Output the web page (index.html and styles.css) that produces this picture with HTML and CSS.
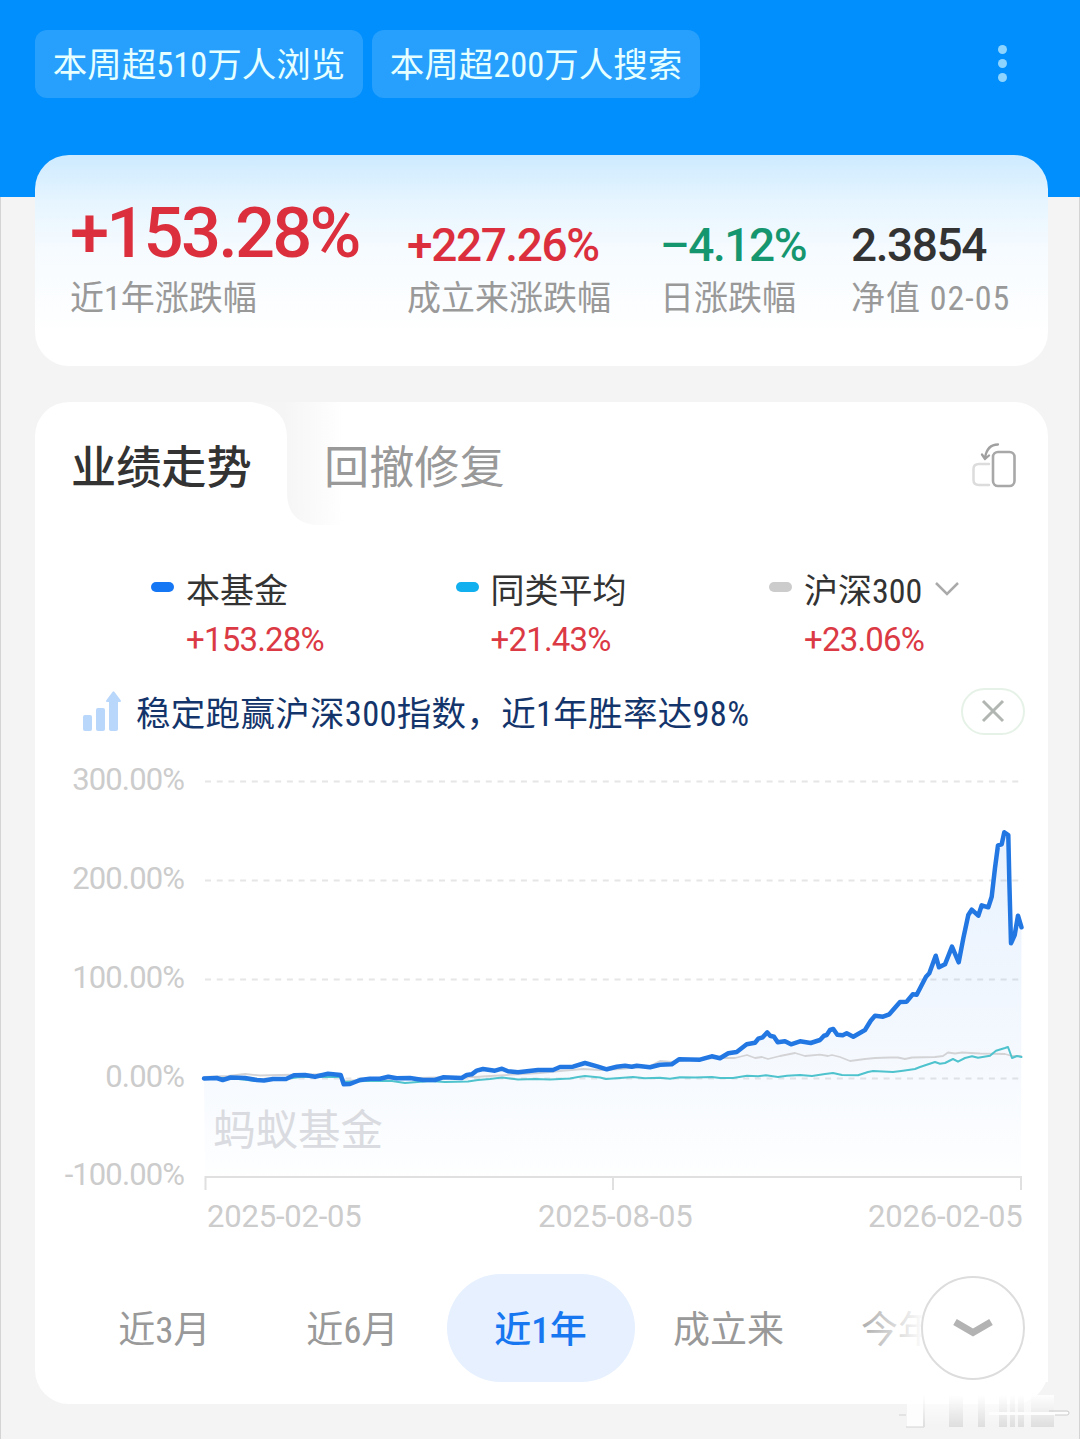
FILE: index.html
```html
<!DOCTYPE html>
<html lang="zh-CN">
<head>
<meta charset="utf-8">
<title>基金详情</title>
<link rel="stylesheet" href="styles.css">
</head>
<body>

<header class="top">
  <span class="chip">本周超510万人浏览</span>
  <span class="chip">本周超200万人搜索</span>
  <div class="more"><i></i><i></i><i></i></div>
</header>

<section class="card summary">
  <div class="stat big">
    <div class="num up">+153.28%</div>
    <div class="label">近1年涨跌幅</div>
  </div>
  <div class="stat">
    <div class="num up">+227.26%</div>
    <div class="label">成立来涨跌幅</div>
  </div>
  <div class="stat">
    <div class="num down">–4.12%</div>
    <div class="label">日涨跌幅</div>
  </div>
  <div class="stat">
    <div class="num">2.3854</div>
    <div class="label date">净值 02-05</div>
  </div>
</section>

<section class="card trend">
  <div class="tabs">
    <svg class="tab-edge" width="100" height="124" viewBox="0 0 100 124">
      <defs>
        <linearGradient id="edge" x1="0.35" x2="1" y1="0" y2="0">
          <stop offset="0" stop-color="#f5f5f5"/>
          <stop offset="1" stop-color="#fff"/>
        </linearGradient>
      </defs>
      <path d="M0 0H92V123H66Q36 121 36 90V36Q36 4 0 0Z" fill="url(#edge)"/>
    </svg>
    <div class="tab active">业绩走势</div>
    <div class="tab">回撤修复</div>
    <svg class="rotate" width="46" height="48" viewBox="0 0 46 48" fill="none" stroke-linecap="round" stroke-linejoin="round">
      <path d="M18 22H8Q2.500 22 2.500 27V38Q2.500 43 8 43H18" stroke="#dcdcdc" stroke-width="2.500"/>
      <rect x="22" y="10" width="21.500" height="34" rx="5" stroke="#a8a8a8" stroke-width="2.600"/>
      <path d="M27 2.500Q16 2.500 14 16M11 12.500L14 17L18 13.500" stroke="#a0a0a0" stroke-width="2.300"/>
    </svg>
  </div>

  <div class="legend">
    <div class="series">
      <i class="mark fund"></i>
      <div><div class="name">本基金</div><div class="value">+153.28%</div></div>
    </div>
    <div class="series">
      <i class="mark avg"></i>
      <div><div class="name">同类平均</div><div class="value">+21.43%</div></div>
    </div>
    <div class="series">
      <i class="mark hs"></i>
      <div><div class="name">沪深300</div><div class="value">+23.06%</div></div>
      <svg class="drop" width="26" height="18" viewBox="0 0 26 18" fill="none" stroke="#aaa" stroke-width="2.500"><path d="M2 3L13 14L24 3"/></svg>
    </div>
  </div>

  <div class="tip">
    <svg width="40" height="42" viewBox="0 0 40 42" fill="#b9d6fb">
      <rect x="0" y="25" width="9" height="16" rx="2"/>
      <rect x="13" y="18" width="9" height="23" rx="2"/>
      <path d="M26 39V12H23.500Q22.500 11 23.500 10L29.500 2Q30.500 0.500 31.500 2L37.500 10Q38.500 11 37.500 12H35V39Q35 41 33 41H28Q26 41 26 39Z"/>
    </svg>
    <span class="tip-text">稳定跑赢沪深300指数，近1年胜率达98%</span>
    <button class="close"><svg width="24" height="24" viewBox="0 0 24 24" stroke="#b2b6b2" stroke-width="3"><path d="M2 2L22 22M22 2L2 22"/></svg></button>
  </div>

  <svg class="chart" width="1013" height="490" viewBox="35 750 1013 490">
    <defs>
      <linearGradient id="fill" gradientUnits="userSpaceOnUse" x1="0" y1="830" x2="0" y2="1176">
        <stop offset="0" stop-color="#1677f0" stop-opacity="0.100"/>
        <stop offset="0.600" stop-color="#1677f0" stop-opacity="0.050"/>
        <stop offset="1" stop-color="#1677f0" stop-opacity="0.005"/>
      </linearGradient>
    </defs>
    <g class="grid">
      <path d="M205 781.500H1021M205 880.500H1021M205 979.500H1021M205 1078.500H1021"/>
    </g>
    <path class="axis" d="M205.500 1190V1177H1021V1190M613 1177V1190"/>
    <g class="ylab">
      <text x="184" y="790">300.00%</text>
      <text x="184" y="889">200.00%</text>
      <text x="184" y="988">100.00%</text>
      <text x="184" y="1087">0.00%</text>
      <text x="184" y="1185">-100.00%</text>
    </g>
    <g class="xlab">
      <text x="207" y="1227">2025-02-05</text>
      <text x="538" y="1227">2025-08-05</text>
      <text x="868" y="1227">2026-02-05</text>
    </g>
    <path id="area" fill="url(#fill)"/>
    <text class="wm" x="213" y="1145">蚂蚁基金</text>
    <polyline class="line hs" points="204,1077 228,1076 245,1074 260,1075.5 280,1075 340,1074 345,1081 375,1079 460,1077 475,1077 490,1076 540,1073 560,1071 583,1069 600,1070 620,1069 650,1066 660,1061 672,1062 690,1059 720,1058 735,1058 747,1055 755,1058 762,1057 768,1059 780,1056 795,1053 805,1056 820,1054.7 828,1056 832,1055 840,1057 850,1061 865,1059 875,1058 890,1057.5 898,1057.500 905,1059 912,1057.500 935,1057 943,1056 948,1052.5 955,1053.500 962,1052.500 980,1053.5 1005,1054 1012,1056 1021,1056"/>
    <polyline class="line avg" points="204,1078 230,1078 256,1081 285,1079 300,1077 340,1077 345,1082 365,1081 380,1081 392,1081 405,1083 430,1081 445,1082 468,1081.5 478,1080 490,1079 502,1077.5 518,1079.5 535,1079 550,1079.500 570,1078.5 578,1077 585,1076 600,1077.5 606,1079 620,1078 633,1077 645,1078.3 660,1077.7 670,1078.7 680,1077.3 695,1077.500 712,1077 720,1078 733,1078 747,1075.7 758,1076.3 766,1075.3 778,1077 787,1075.7 800,1075 812,1076 825,1074 833,1073 842,1075 858,1075.3 868,1072 873,1071 893,1072 903,1070.7 915,1069 920,1067 935,1062 940,1063.7 945,1063 953,1059 958,1061.7 965,1058 972,1056.3 978,1057.7 990,1055.7 996,1050.7 1005,1048 1008,1047 1012,1058 1017,1056 1021.5,1057"/>
    <polyline id="fund" class="line fund" points="204,1078.5 216.7,1078 222.7,1080 230.7,1077.5 245,1078 256.7,1080 264,1080.5 273,1079 286,1079 294,1075.3 305,1075 315,1076.7 328,1073.7 340.7,1075 343.7,1084.3 350,1084 360,1080 370,1078.7 380,1078.7 388.3,1076.7 396.7,1078.3 410,1078 423,1080 435,1080 443,1077.3 461.7,1078 466.7,1075 471.7,1074.3 476.7,1070.7 483,1069 495,1070.7 502,1068.7 508,1071.3 518,1072.3 538,1070 553,1070 560,1067 573,1066.7 585,1063 598,1066.7 606.7,1069.3 616.7,1066.7 625,1065.7 631.7,1066.7 636.7,1065.7 650,1067.3 660,1064.7 671.7,1064.3 679,1059.3 700,1059.7 711.7,1056.3 720,1058.3 728.3,1053.3 736.7,1052 746.7,1044.3 755,1042.7 758.3,1038.7 762.7,1037.3 767.3,1032.3 770,1035.7 774,1036.7 777.7,1042.3 785,1041.3 791,1044.3 800,1041.3 810.7,1043 820,1040 824,1035.7 826.7,1035 830,1030 833.3,1029 837.3,1034.7 842.7,1035.3 846.7,1033.3 853.3,1036.7 865,1030 870.7,1020.7 875,1015.7 883,1016.7 889.3,1014.3 900,1002 906.7,1001.7 912.7,994.3 916.7,994.7 926,976.7 929.3,973.3 935.7,955.7 939,967.3 945,964.3 952,946.7 958.7,962.3 963.3,938.3 968.3,915 971.7,909.7 978.3,915.7 981.7,905.3 988.3,907.3 991.7,896.7 995,868 998,845.3 1001.7,844.3 1004.3,832.3 1008.3,835 1009.3,880 1011,943.3 1014.7,935 1018,915.7 1021.5,927.3"/>
  </svg>

  <div class="periods">
    <span>近3月</span>
    <span>近6月</span>
    <span class="on">近1年</span>
    <span>成立来</span>
    <span>今年来</span>
    <div class="fade"></div>
    <button class="expand"><svg width="40" height="22" viewBox="0 0 40 22" fill="none" stroke="#b3b3b3" stroke-width="7"><path d="M2 5L20 15.500L38 5"/></svg></button>
  </div>
</section>

<svg class="smear" width="176" height="46" viewBox="0 0 176 46">
  <defs>
    <linearGradient id="sg" x1="0" x2="0" y1="0" y2="1">
      <stop offset="0" stop-color="#fff"/>
      <stop offset="0.300" stop-color="#f6f6f6"/>
      <stop offset="1" stop-color="#dcdcdc"/>
    </linearGradient>
    <linearGradient id="sw" x1="0" x2="0" y1="0" y2="1">
      <stop offset="0" stop-color="#fff"/>
      <stop offset="1" stop-color="#fff" stop-opacity="0"/>
    </linearGradient>
  </defs>
  <rect x="8" y="8" width="140" height="34" fill="url(#sw)"/>
  <rect x="8" y="8" width="16" height="32" fill="#fff"/>
  <path d="M7 40H25M0 28H7" stroke="#d0d0d0"/>
  <g fill="url(#sg)">
    <rect x="24" y="8" width="2" height="32"/>
    <rect x="50" y="8" width="14" height="32"/>
    <rect x="79" y="8" width="7" height="32"/>
    <rect x="100" y="8" width="8" height="32"/>
    <rect x="111" y="8" width="5" height="32"/>
    <rect x="119" y="8" width="6" height="32"/>
    <rect x="132" y="8" width="23" height="32"/>
  </g>
  <rect x="90" y="25" width="80" height="3" rx="1.500" fill="#fff"/>
  <path d="M150 24H168Q170 24 170 26Q170 28 168 28H156" stroke="#c8c8c8" fill="none"/>
</svg>

<script>
// close the fund line down to the axis for the shaded area
var pts = document.getElementById('fund').getAttribute('points');
document.getElementById('area').setAttribute('d', 'M205,1176 L' + pts + ' L1021,1176 Z');
</script>

</body>
</html>
```
FILE: styles.css
```css
* { box-sizing: border-box; }
body { margin: 0; height: 1439px; overflow: hidden; position: relative; background: #f4f4f4; color: #333; font-family: "Roboto Condensed", "Noto Sans CJK SC", sans-serif; box-shadow: inset 1px 0 #d4d4d4, inset -1px 0 #d4d4d4; }
button { padding: 0; background: #fff; display: flex; align-items: center; justify-content: center; }

.top { height: 197px; background: #008ffc; padding: 30px 35px 0; display: flex; align-items: flex-start; gap: 9px; }
.chip { width: 328px; height: 68px; line-height: 71px; border-radius: 12px; background: #279ffd; color: #e6ffff; font-size: 34.5px; text-align: center; white-space: nowrap; }
.more { margin: 15px 38px 0 auto; display: flex; flex-direction: column; gap: 5px; }
.more i { width: 9px; height: 9px; border-radius: 50%; background: #8dd4ff; }

.card { margin: 0 32px 0 35px; border-radius: 34px; background: #fff; position: relative; }
.summary { margin-top: -42px; height: 211px; padding: 30px 0 0 35px; display: grid; grid-template-columns: 337px 253px 191px auto; background: linear-gradient(#cdeaff, #e6f5ff 22%, #f6fbff 45%, #fff 85%); }
.num { height: 92px; line-height: 120px; font-family: Roboto, sans-serif; font-size: 46px; font-weight: 500; letter-spacing: -1.400px; white-space: nowrap; }
.big .num { line-height: 97px; font-size: 70.500px; letter-spacing: -2.800px; }
.up { color: #dc2f3e; }
.down { color: #15966f; }
.label { line-height: 42px; font-size: 34px; color: #999; white-space: nowrap; }
.date { letter-spacing: 1px; }

.trend { margin-top: 36px; height: 1002px; }
.tabs { height: 148px; padding: 0 31px 0 36px; display: flex; }
.tab-edge { position: absolute; left: 216px; top: 0; }
.tab { position: relative; width: 253px; line-height: 134px; font-size: 45.200px; color: #999; }
.tab.active { color: #333; font-weight: 500; }
.rotate { margin: 40px 0 0 auto; }

.legend { height: 128px; padding: 17px 0 0 116px; display: grid; grid-template-columns: 304.500px 313.500px auto; }
.series { display: flex; align-items: flex-start; }
.mark { width: 23px; height: 10px; margin: 15px 12px 0 0; border-radius: 5px; }
.mark.fund { background: #1677f5; }
.mark.avg { background: #12b0ee; }
.mark.hs { background: #ccc; }
.name { line-height: 48px; font-size: 34px; }
.value { line-height: 50px; font-family: Roboto, sans-serif; font-size: 33px; letter-spacing: -0.800px; color: #db3a45; }
.drop { margin: 13px 0 0 10px; }

.tip { height: 66px; padding: 0 23px 0 48px; display: flex; align-items: center; }
.tip-text { margin-left: 13px; font-size: 34.500px; letter-spacing: 0.300px; color: #14356b; white-space: nowrap; }
.close { width: 64px; height: 47px; margin-left: auto; border: 2px solid #e6f2e7; border-radius: 24px; }

.chart { display: block; margin-top: 6px; }
.grid { stroke: #e6e6e6; stroke-width: 2; stroke-dasharray: 6 5.700; }
.axis { fill: none; stroke: #e0e0e0; stroke-width: 2; }
.ylab { font-family: Roboto, sans-serif; fill: #ccc; font-size: 31px; letter-spacing: -0.900px; text-anchor: end; }
.xlab { font-family: Roboto, sans-serif; fill: #ccc; font-size: 31px; letter-spacing: -0.200px; }
.wm { fill: #d9dbe0; font-size: 42.500px; }
.line { fill: none; stroke-linejoin: round; stroke-linecap: round; }
.line.hs { stroke: #d3d3d6; stroke-width: 1.800; }
.line.avg { stroke: #4fc3cd; stroke-width: 2; }
.line.fund { stroke: #2277e3; stroke-width: 4.500; }

.periods { position: relative; height: 108px; margin-top: 34px; padding-left: 35.500px; display: flex; overflow: hidden; }
.periods span { flex: none; width: 188px; line-height: 114px; font-size: 37px; color: #999; text-align: center; }
.periods .on { border-radius: 54px; background: #e6f0ff; color: #1677f0; font-weight: 500; }
.fade { position: absolute; left: 810px; top: 0; width: 203px; height: 108px; background: linear-gradient(90deg, rgba(255,255,255,0), #fff 80px); }
.expand { position: absolute; left: 886px; top: 2px; width: 104px; height: 104px; border: 2px solid #ddd; border-radius: 50%; }

.smear { position: absolute; left: 899px; top: 1387px; opacity: 0.900; }
```
